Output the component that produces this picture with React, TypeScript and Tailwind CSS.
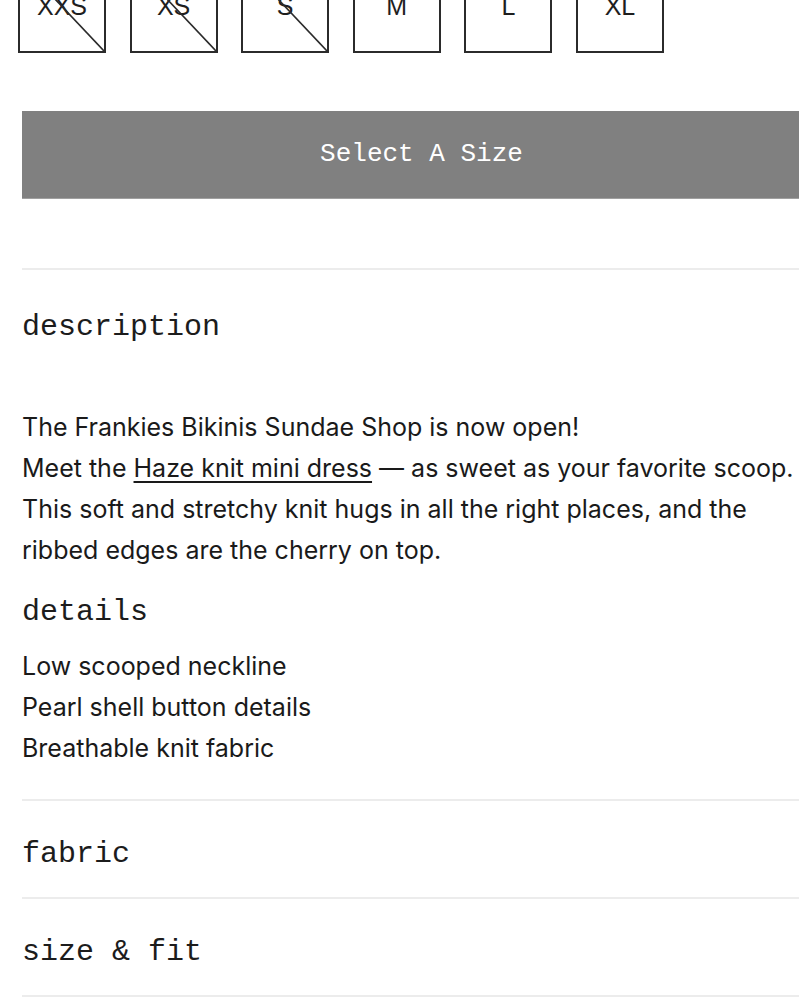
import React from 'react';

const sizes = [
  { label: 'XXS', soldOut: true },
  { label: 'XS', soldOut: true },
  { label: 'S', soldOut: true },
  { label: 'M', soldOut: false },
  { label: 'L', soldOut: false },
  { label: 'XL', soldOut: false },
];

const mono = "font-['Liberation_Mono','Courier_New',monospace]";
const sans = "font-['Inter','Noto_Sans',sans-serif]";

function SizeBox({ label, soldOut }: { label: string; soldOut: boolean }) {
  return (
    <button className="relative w-[88px] h-[93px] shrink-0 border-2 border-[#2b2b2b] bg-white flex items-center justify-center">
      <span className="font-['Liberation_Sans',Arial,sans-serif] text-[25px] leading-none text-[#1e1e1e]">{label}</span>
      {soldOut && (
        <svg className="absolute inset-0 w-full h-full" viewBox="0 0 100 100" preserveAspectRatio="none">
          <line x1="0" y1="0" x2="100" y2="100" stroke="#2b2b2b" strokeWidth="1.6" vectorEffect="non-scaling-stroke" />
        </svg>
      )}
    </button>
  );
}

function Section({ title }: { title: string }) {
  return (
    <div className="border-b-2 border-[#ececec] pt-[35px] pb-[25px]">
      <h2 className={`${mono} text-[30px] leading-[36px] text-[#1c1c1c]`}>{title}</h2>
    </div>
  );
}

export default function App() {
  return (
    <div className="bg-white w-[799px] h-[1000px] overflow-hidden">
      <div className="mt-[-40px] flex gap-[23.6px] pl-[18px]">
        {sizes.map((s) => (
          <SizeBox key={s.label} {...s} />
        ))}
      </div>

      <div className="ml-[22px] w-[799px]">
        <button className={`mt-[58px] w-full h-[88px] bg-[#808080] border-b border-[#a0a0a0] text-white ${mono} text-[26px] flex items-center justify-center`}>
          Select A Size
        </button>

        <div className="mt-[69px] border-t-2 border-[#ececec]">
          <h2 className={`${mono} mt-[39px] text-[30px] leading-[36px] text-[#1c1c1c]`}>description</h2>
          <div className={`${sans} mt-[62px] text-[25px] leading-[41px] text-[#1a1a1a] pr-[10px]`}>
            <p>The Frankies Bikinis Sundae Shop is now open!</p>
            <p>
              Meet the <a className="underline underline-offset-[4px] decoration-[1.5px]">Haze knit mini dress</a> — as sweet as your favorite scoop.
            </p>
            <p>This soft and stretchy knit hugs in all the right places, and the ribbed edges are the cherry on top.</p>
          </div>
          <h2 className={`${mono} mt-[23px] text-[30px] leading-[36px] text-[#1c1c1c]`}>details</h2>
          <ul className={`${sans} mt-[16px] text-[25px] leading-[41px] text-[#1a1a1a]`}>
            <li>Low scooped neckline</li>
            <li>Pearl shell button details</li>
            <li>Breathable knit fabric</li>
          </ul>
          <div className="mt-[30px] border-t-2 border-[#ececec]" />
          <Section title="fabric" />
          <Section title="size & fit" />
        </div>
      </div>
    </div>
  );
}
